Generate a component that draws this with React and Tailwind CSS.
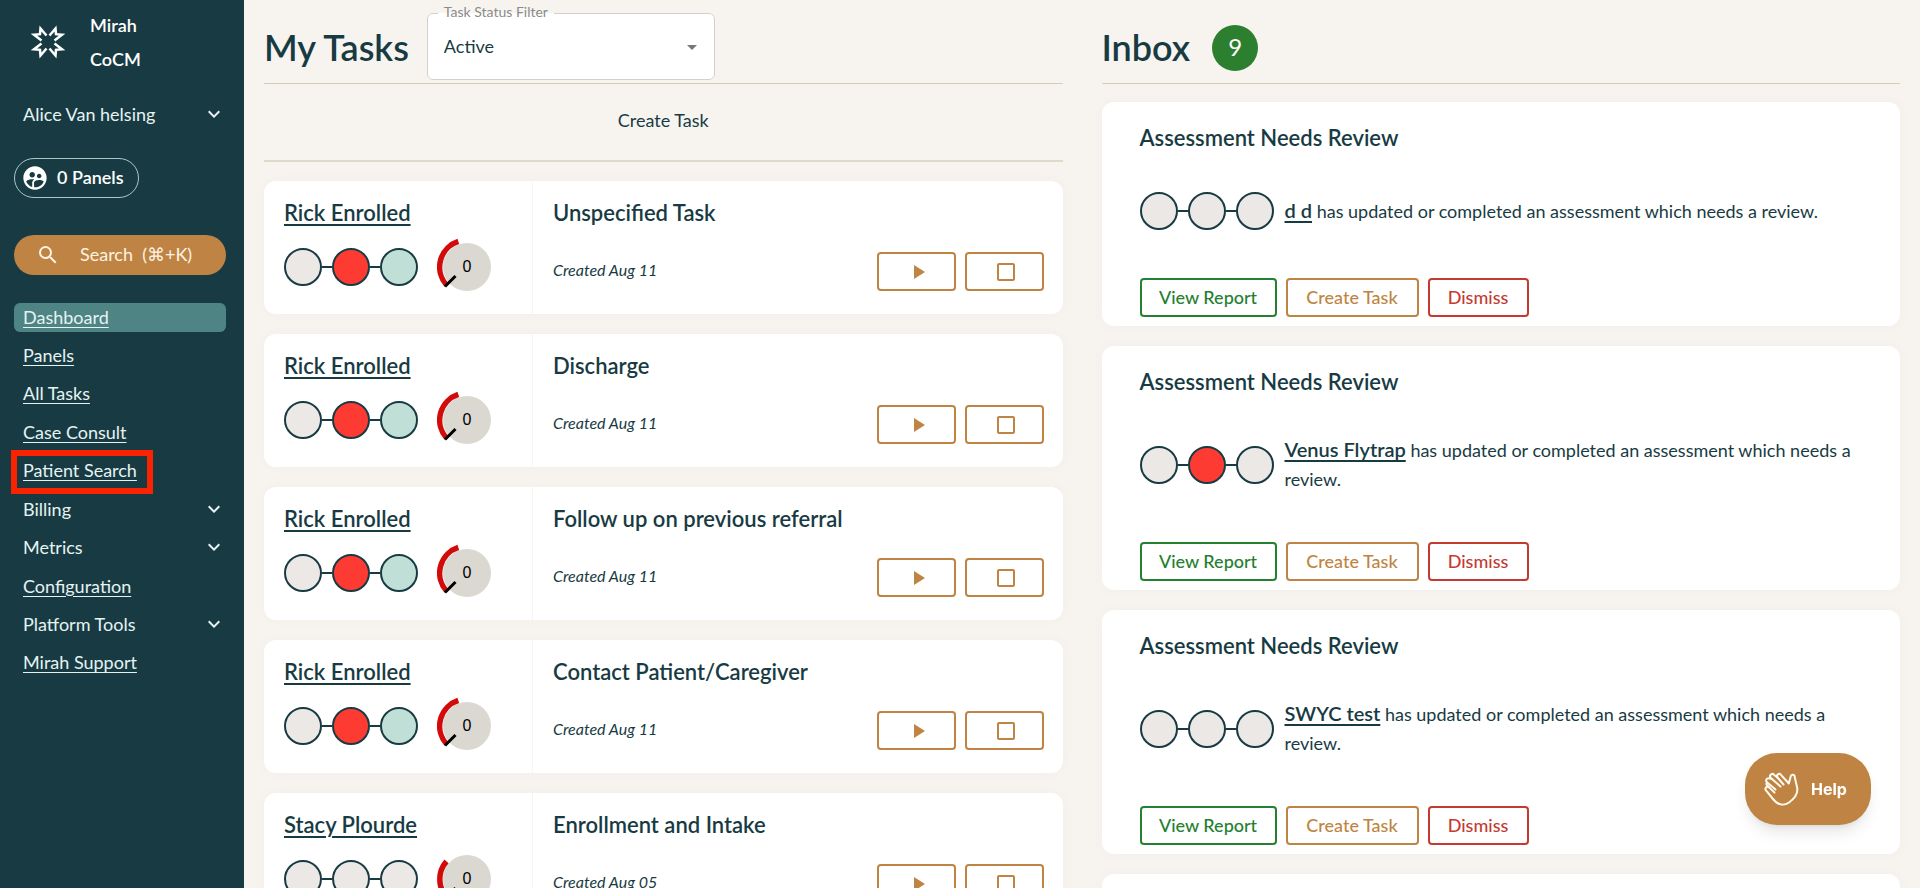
import {
  MdArrowDropDown,
  MdCheckBoxOutlineBlank,
  MdKeyboardArrowDown,
  MdPlayArrow,
  MdSearch,
  MdSupervisedUserCircle,
} from "react-icons/md";

const navItems = [
  { label: "Dashboard", active: true },
  { label: "Panels" },
  { label: "All Tasks" },
  { label: "Case Consult" },
  { label: "Patient Search", highlighted: true },
  { label: "Billing", expandable: true },
  { label: "Metrics", expandable: true },
  { label: "Configuration" },
  { label: "Platform Tools", expandable: true },
  { label: "Mirah Support" },
];

const tasks = [
  { patient: "Rick Enrolled", title: "Unspecified Task", created: "Aug 11", dots: ["none", "red", "green"], arc: "wide" },
  { patient: "Rick Enrolled", title: "Discharge", created: "Aug 11", dots: ["none", "red", "green"], arc: "wide" },
  { patient: "Rick Enrolled", title: "Follow up on previous referral", created: "Aug 11", dots: ["none", "red", "green"], arc: "wide" },
  { patient: "Rick Enrolled", title: "Contact Patient/Caregiver", created: "Aug 11", dots: ["none", "red", "green"], arc: "wide" },
  { patient: "Stacy Plourde", title: "Enrollment and Intake", created: "Aug 05", dots: ["none", "none", "none"], arc: "narrow" },
];

const messages = [
  { patient: "d d", dots: ["none", "none", "none"] },
  { patient: "Venus Flytrap", dots: ["none", "red", "none"] },
  { patient: "SWYC test", dots: ["none", "none", "none"] },
  { patient: "Rick Enrolled", dots: ["none", "none", "none"] },
];

const dotColors = {
  none: "bg-[#ece8e6]",
  red: "bg-[#fd3b33]",
  green: "bg-[#c0dfd6]",
};

const arcs = {
  wide: "M21.3 4.4 A27 27 0 0 0 9.5 48",
  narrow: "M9.5 12.4 A27 27 0 0 0 9.5 48",
};

function Logo() {
  return (
    <svg viewBox="0 0 44 44" className="h-11 w-11" fill="none" stroke="white" strokeWidth="2.5">
      <path d="M20.5 15.5 L14.5 8.5 L14 14.2 L8 14.7 L15.5 20.5" />
      <path d="M23.5 15.5 L29.5 8.5 L30 14.2 L36 14.7 L28.5 20.5" />
      <path d="M20.5 28.5 L14.5 35.5 L14 29.8 L8 29.3 L15.5 23.5" />
      <path d="M23.5 28.5 L29.5 35.5 L30 29.8 L36 29.3 L28.5 23.5" />
    </svg>
  );
}

function Dots({ dots }) {
  return (
    <div className="flex shrink-0 items-center">
      {dots.map((dot, i) => (
        <div key={i} className="flex items-center">
          {i > 0 && <div className="h-0.5 w-2.5 bg-[#183b43]" />}
          <div className={`h-[38px] w-[38px] rounded-full border-2 border-[#183b43] ${dotColors[dot]}`} />
        </div>
      ))}
    </div>
  );
}

function Gauge({ arc }) {
  return (
    <svg viewBox="0 0 60 60" className="h-[60px] w-[60px]">
      <circle cx="30" cy="30" r="24" fill="#dad8d0" />
      <path d={arcs[arc]} fill="none" stroke="#d30a0a" strokeWidth="5.5" />
      <path d="M8 49.5 L18.5 39" stroke="black" strokeWidth="3" />
      <text x="30" y="35" textAnchor="middle" fontSize="16" fontFamily="Liberation Sans, sans-serif">0</text>
    </svg>
  );
}

function Sidebar() {
  return (
    <aside className="w-[244px] shrink-0 bg-[#183b43] pl-3.5 pr-[18px] pt-2 text-lg text-[#e6f3f3]">
      <div className="flex pl-3">
        <div className="pt-3">
          <Logo />
        </div>
        <div className="pl-5 font-semibold leading-[34px] text-white">
          <p>Mirah</p>
          <p>CoCM</p>
        </div>
      </div>

      <button className="mt-6 flex h-[30px] w-full items-center justify-between pb-0.5 pl-[9px]">
        Alice Van helsing
        <MdKeyboardArrowDown size={24} />
      </button>

      <button className="mt-7 flex h-10 items-center gap-2 rounded-full border border-[#a9c9c9] pl-1.5 pr-3.5 font-semibold text-white">
        <MdSupervisedUserCircle size={28} />
        <span className="pb-0.5">0 Panels</span>
      </button>

      <button className="mt-[37px] flex h-10 w-full items-center rounded-full bg-[#bf8443] pl-[22px] text-[#fdf3e4]">
        <MdSearch size={24} />
        <span className="pb-0.5 pl-5">Search&nbsp; (⌘+K)</span>
      </button>

      <nav className="mt-7 flex h-[375px] flex-col justify-between">
        {navItems.map((item) =>
          item.expandable ? (
            <button key={item.label} className="flex h-[29px] items-center justify-between pb-0.5 pl-[9px]">
              {item.label}
              <MdKeyboardArrowDown size={24} />
            </button>
          ) : (
            <a
              key={item.label}
              href="#"
              className={`flex h-[29px] items-center rounded-md pb-0.5 pl-[9px] underline underline-offset-3 ${item.active ? "bg-[#4e8483]" : ""}`}
            >
              <span className="relative">
                {item.label}
                {item.highlighted && (
                  <span className="absolute -bottom-2.5 -left-3 -right-4 -top-1.5 border-6 border-[#fb2200]" />
                )}
              </span>
            </a>
          )
        )}
      </nav>
    </aside>
  );
}

function StatusFilter() {
  return (
    <fieldset className="relative h-[79px] w-72 rounded-md border border-[#d3d1cd] bg-white pl-2.5">
      <legend className="h-6 px-1.5 text-sm leading-[22px] text-[#8b8b89]">
        <label htmlFor="status">Task Status Filter</label>
      </legend>
      <select id="status" className="h-[42px] w-full appearance-none bg-transparent pl-1.5 text-lg outline-none">
        <option>Active</option>
        <option>Completed</option>
      </select>
      <MdArrowDropDown size={24} className="pointer-events-none absolute right-2.5 top-2.5 text-[#777]" />
    </fieldset>
  );
}

function TaskCard({ task }) {
  return (
    <article className="flex h-[133px] rounded-xl bg-white shadow-[0_0_12px_rgba(90,60,60,0.03)]">
      <div className="w-[269px] shrink-0 border-r border-[#f6f5f4] px-5 pt-4">
        <a href="#" className="block text-[22px] font-semibold leading-8 underline underline-offset-3">
          {task.patient}
        </a>
        <div className="flex items-center pt-2">
          <Dots dots={task.dots} />
          <div className="pl-[19px]">
            <Gauge arc={task.arc} />
          </div>
        </div>
      </div>
      <div className="flex-1 pl-5 pr-[19px] pt-4">
        <h2 className="text-[22px] font-semibold leading-8">{task.title}</h2>
        <div className="flex items-center gap-[9px] pt-[23px]">
          <p className="flex-1 pb-1 text-base italic">Created {task.created}</p>
          <button aria-label="Start task" className="flex h-[39px] w-[79px] items-center justify-center rounded border-2 border-[#bf8443] pl-1 text-[#bf8443]">
            <MdPlayArrow size={24} />
          </button>
          <button aria-label="Finish task" className="flex h-[39px] w-[79px] items-center justify-center rounded border-2 border-[#bf8443] pl-1 text-[#bf8443]">
            <MdCheckBoxOutlineBlank size={24} />
          </button>
        </div>
      </div>
    </article>
  );
}

function MessageCard({ message }) {
  return (
    <article className="rounded-xl bg-white px-[38px] pb-[9px] pt-5 shadow-[0_0_12px_rgba(90,60,60,0.03)]">
      <h2 className="text-[22px] font-semibold leading-8">Assessment Needs Review</h2>
      <div className="flex items-center gap-[11px] pb-12 pt-[38px]">
        <Dots dots={message.dots} />
        <p className="text-lg leading-[29px]">
          <a href="#" className="text-xl font-semibold leading-none underline underline-offset-3">{message.patient}</a>{" "}
          has updated or completed an assessment which needs a review.
        </p>
      </div>
      <div className="flex gap-[9px] text-lg font-medium">
        <button className="h-[39px] w-[137px] rounded border-2 border-[#25802f] pb-0.5 text-[#25802f]">View Report</button>
        <button className="h-[39px] w-[133px] rounded border-2 border-[#bf8443] pb-0.5 text-[#bf8443]">Create Task</button>
        <button className="h-[39px] w-[101px] rounded border-2 border-[#c43a30] pb-0.5 text-[#c43a30]">Dismiss</button>
      </div>
    </article>
  );
}

function HelpButton() {
  return (
    <button className="fixed bottom-[63px] right-[49px] flex h-[72px] w-[126px] items-center gap-3 rounded-[32px] bg-[#bf8443] pl-[18px] font-[Inter] text-base font-bold text-white shadow-lg">
      <svg viewBox="0 0 36 36" className="h-9 w-9" fill="none" stroke="#fffaf0" strokeWidth="2" strokeLinecap="round" strokeLinejoin="round">
        <path d="M11.5 21.5 L6.4 16.6 A2.2 2.2 0 0 0 3 19.4 L10 28 C14.5 33.5 20.5 35.5 26 31.5 C33 26.5 35.5 22 34 16 L31.7 6 A2 2 0 0 0 27.7 5.5 L25.8 12.5 L18 3.8 A2.2 2.2 0 0 0 14.5 6.5 L20.5 13.5" />
        <path d="M17.5 15.5 L7.6 6.8 A2.2 2.2 0 0 1 11.2 3.9 L15 7" />
        <path d="M12.5 18.5 L4.2 11.5 A2.2 2.2 0 0 1 6.5 7.6 L8.6 7.7" />
        <path d="M6.4 16.6 L4 14.2 A2 2 0 0 1 4.2 11.5" />
      </svg>
      Help
    </button>
  );
}

function App() {
  return (
    <div className="flex h-screen overflow-hidden bg-[#f7f4f0] font-[Lato,sans-serif] text-[#183b43]">
      <Sidebar />

      <main className="grid flex-1 grid-cols-2 gap-[39px] overflow-hidden pl-5 pr-5">
        <section>
          <header className="flex h-[84px] items-start gap-[18px] border-b border-[#d6cdb8] pt-px">
            <h1 className="pt-5 text-4xl font-semibold leading-[52px]">My Tasks</h1>
            <StatusFilter />
          </header>
          <div className="flex h-[78px] items-center justify-center border-b-2 border-[#dfd9c8]">
            <button className="pb-1 text-lg">Create Task</button>
          </div>
          <div className="flex flex-col gap-5 pt-[19px]">
            {tasks.map((task, i) => (
              <TaskCard key={i} task={task} />
            ))}
          </div>
        </section>

        <section>
          <header className="flex h-[84px] items-start gap-[22px] border-b border-[#d6cdb8] pt-px">
            <h1 className="pt-5 text-4xl font-semibold leading-[52px]">Inbox</h1>
            <span className="mt-6 flex h-[46px] w-[46px] items-center justify-center rounded-full bg-[#2c7f2e] pb-0.5 text-2xl text-white">9</span>
          </header>
          <div className="flex flex-col gap-5 pt-[18px]">
            {messages.map((message, i) => (
              <MessageCard key={i} message={message} />
            ))}
          </div>
        </section>
      </main>

      <HelpButton />
    </div>
  );
}

export default App;
